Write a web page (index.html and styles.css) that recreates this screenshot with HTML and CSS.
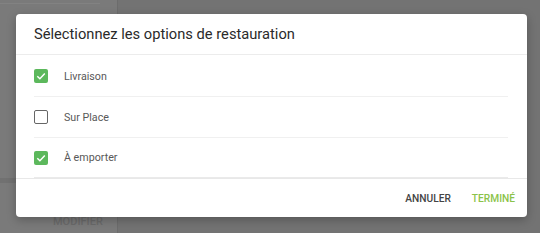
FILE: index.html
```html
<!DOCTYPE html>
<html lang="fr">
<head>
    <meta charset="UTF-8">
    <meta name="viewport" content="width=device-width, initial-scale=1.0">
    <title>Options de restauration</title>
    <link rel="stylesheet" href="styles.css">
</head>
<body>
    <div class="page">
        <div class="sidebar">
            <div class="side-top"></div>
            <div class="side-band"></div>
            <div class="side-btn">MODIFIER</div>
        </div>
        <div class="main"></div>
    </div>

    <div class="dialog">
        <div class="dialog-title">Sélectionnez les options de restauration</div>
        <div class="options">
            <label class="option">
                <span class="check checked">
                    <svg viewBox="0 0 14 14" width="14" height="14"><path d="M3.3 7.2 L5.9 9.7 L10.8 4.6" fill="none" stroke="#fff" stroke-width="1.5"/></svg>
                </span>
                <span class="option-label">Livraison</span>
            </label>
            <label class="option">
                <span class="check"></span>
                <span class="option-label">Sur Place</span>
            </label>
            <label class="option">
                <span class="check checked">
                    <svg viewBox="0 0 14 14" width="14" height="14"><path d="M3.3 7.2 L5.9 9.7 L10.8 4.6" fill="none" stroke="#fff" stroke-width="1.5"/></svg>
                </span>
                <span class="option-label">À emporter</span>
            </label>
        </div>
        <div class="dialog-actions">
            <button class="btn">ANNULER</button>
            <button class="btn btn-primary">TERMINÉ</button>
        </div>
    </div>
</body>
</html>
```

FILE: styles.css
```css
body {
    margin: 0;
    height: 233px;
    overflow: hidden;
    background: #737373;
    font-family: Roboto, "Noto Sans", sans-serif;
}

.page {
    display: flex;
    height: 233px;
}

.sidebar {
    width: 117px;
    background: #7a7a7a;
    border-right: 1px solid #6c6c6c;
    display: flex;
    flex-direction: column;
}

.side-top {
    margin-top: 3px;
    width: 100px;
    height: 1px;
    background: #828282;
}

.side-band {
    margin-top: 174px;
    height: 5px;
    background: #717171;
}

.side-btn {
    margin-top: 32px;
    padding-left: 53px;
    font-size: 11px;
    font-weight: 500;
    color: #6a6a6a;
}

.main {
    flex: 1;
}

.dialog {
    position: absolute;
    left: 16px;
    top: 14px;
    width: 511px;
    background: #fff;
    border-radius: 4px;
    box-shadow: 0 3px 10px rgba(0, 0, 0, 0.25);
}

.dialog-title {
    height: 40px;
    padding: 0 18px;
    display: flex;
    align-items: center;
    font-size: 14.7px;
    color: #2a2a2a;
    border-bottom: 1px solid #ececec;
}

.options {
    padding: 1px 19px 0 18px;
    border-bottom: 1px solid #e8e8e8;
}

.option {
    display: flex;
    align-items: center;
    height: 40px;
    border-bottom: 1px solid #f0f0f0;
}

.option:last-child {
    height: 39px;
    border-bottom-color: #eaeaea;
}

.check {
    width: 12px;
    height: 12px;
    border: 1px solid #666;
    border-radius: 2px;
    margin-right: 16px;
    display: flex;
}

.check.checked {
    width: 14px;
    height: 14px;
    border: none;
    background: #5cb85c;
}

.option-label {
    font-size: 10.7px;
    color: #585858;
}

.dialog-actions {
    display: flex;
    justify-content: flex-end;
    align-items: center;
    gap: 21px;
    height: 38px;
    padding-right: 12px;
}

.btn {
    border: none;
    background: none;
    padding: 0;
    font-family: Roboto, "Noto Sans", sans-serif;
    font-size: 10.2px;
    font-weight: 500;
    color: #444;
    cursor: pointer;
}

.btn-primary {
    color: #8bc34a;
}
```
